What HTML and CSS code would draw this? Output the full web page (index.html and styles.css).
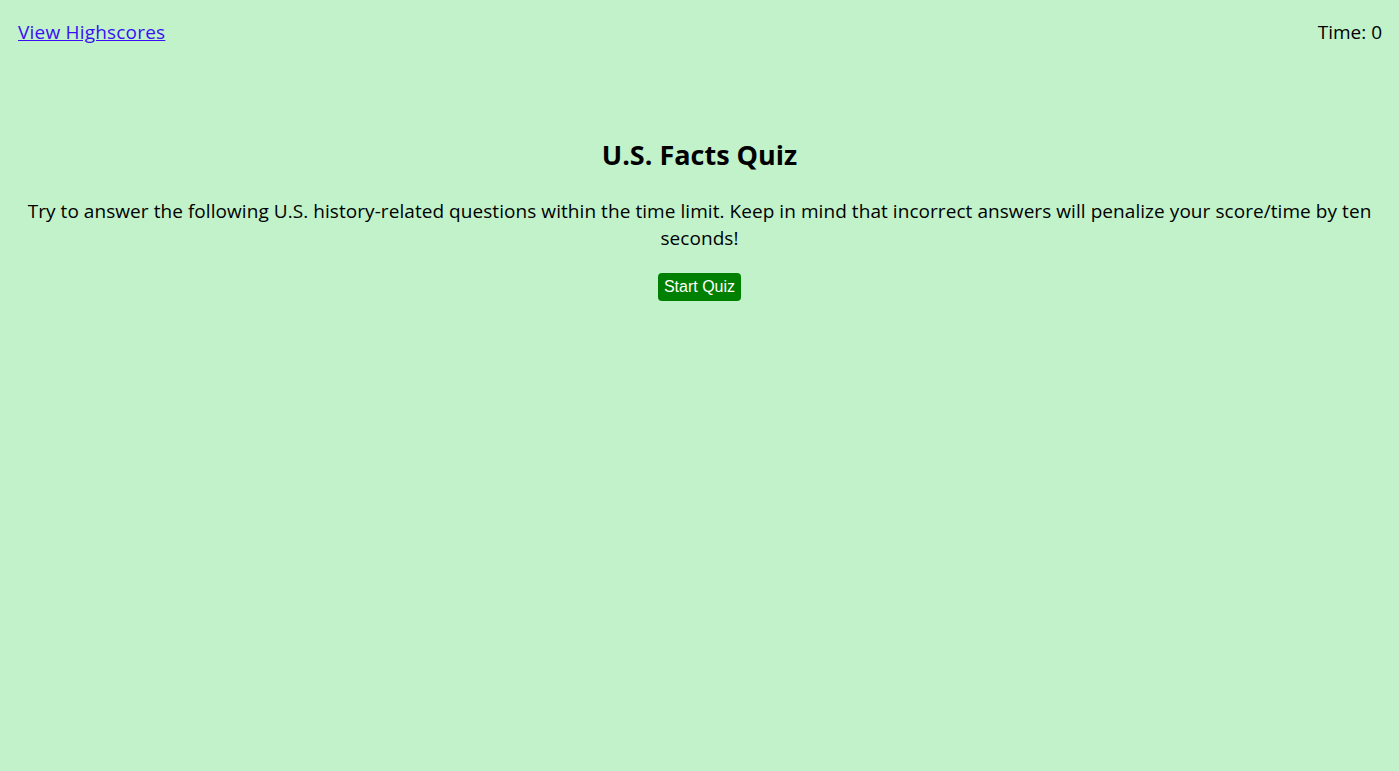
FILE: index.html
```html
<!DOCTYPE html>
<html lang="en">
<head>
<meta charset="utf-8">
<title>U.S. Facts Quiz</title>
<link rel="stylesheet" href="styles.css">
</head>
<body>
<header class="top-bar">
  <a class="highscores-link" href="#">View Highscores</a>
  <div class="timer">Time: 0</div>
</header>
<main class="intro">
  <h2 class="intro-title">U.S. Facts Quiz</h2>
  <p class="intro-text">Try to answer the following U.S. history-related questions within the time limit. Keep in mind that incorrect answers will penalize your score/time by ten seconds!</p>
  <button class="start-btn" type="button">Start Quiz</button>
</main>
</body>
</html>
```

FILE: styles.css
```css
html, body {
  margin: 0;
  padding: 0;
}
body {
  background: #c1f2ca;
  font-family: "Open Sans", "DejaVu Sans", sans-serif;
  font-size: 19px;
  color: #000;
  min-height: 100vh;
}
.top-bar {
  display: flex;
  justify-content: space-between;
  align-items: center;
  padding: 19px 17px 0 18px;
  line-height: 26px;
}
.highscores-link {
  color: #3a0ff5;
  text-decoration: underline;
  letter-spacing: 0.2px;
}
.intro {
  display: flex;
  flex-direction: column;
  align-items: center;
  padding: 0 8px;
  margin-top: 94px;
  text-align: center;
}
.intro-title {
  font-size: 27px;
  font-weight: 700;
  margin: 0 0 27px;
  line-height: 32px;
}
.intro-text {
  margin: 0 0 21px;
  line-height: 27px;
  letter-spacing: 0.06px;
}
.start-btn {
  font-family: "Liberation Sans", Arial, sans-serif;
  font-size: 16px;
  background: #008000;
  color: #fff;
  border: none;
  border-radius: 4px;
  padding: 4px 5.5px 5px;
  line-height: 19px;
}
```
